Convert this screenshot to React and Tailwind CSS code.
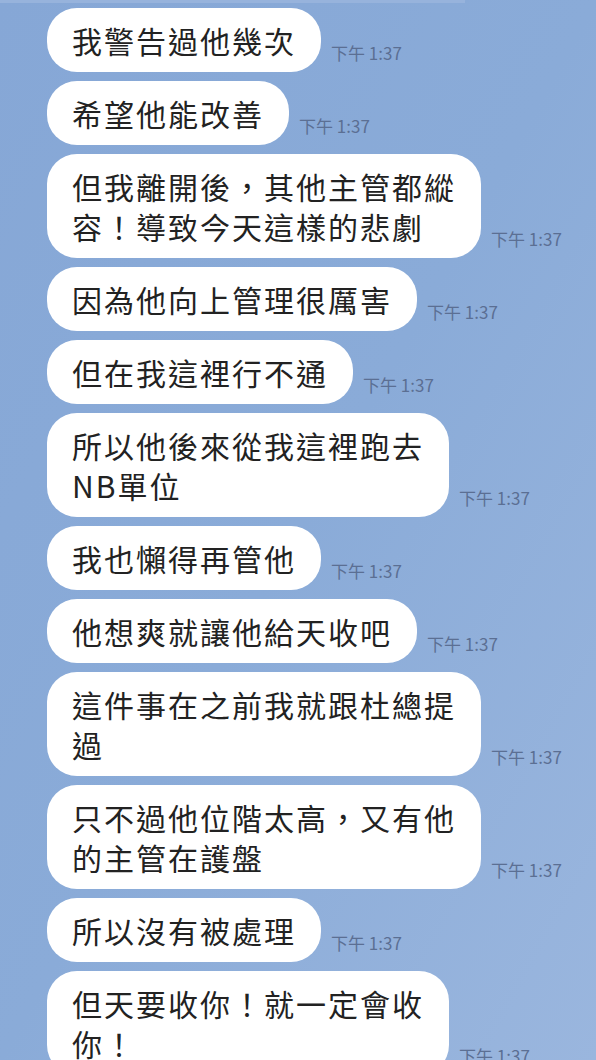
import React from "react";

const messages = [
  ["我警告過他幾次"],
  ["希望他能改善"],
  ["但我離開後，其他主管都縱", "容！導致今天這樣的悲劇"],
  ["因為他向上管理很厲害"],
  ["但在我這裡行不通"],
  ["所以他後來從我這裡跑去", "NB單位"],
  ["我也懶得再管他"],
  ["他想爽就讓他給天收吧"],
  ["這件事在之前我就跟杜總提", "過"],
  ["只不過他位階太高，又有他", "的主管在護盤"],
  ["所以沒有被處理"],
  ["但天要收你！就一定會收", "你！"],
];

function Bubble({ lines }) {
  return (
    <div className="flex items-end gap-[10px]">
      <div className="rounded-[30px] bg-white px-[25px] py-[12px] text-[30px] leading-[40px] tracking-[2px] text-[#222222]">
        {lines.map((l, i) => (
          <div key={i} className="whitespace-nowrap">
            {l}
          </div>
        ))}
      </div>
      <span
        className="pb-[9px] text-[17px] leading-[20px] text-[#5b6f93] whitespace-nowrap"
        style={{ fontFamily: '"Noto Sans CJK TC", "Liberation Sans", sans-serif' }}
      >
        下午 1:37
      </span>
    </div>
  );
}

export default function App() {
  return (
    <div
      className="h-[1060px] w-[596px] overflow-hidden bg-gradient-to-br from-[#86a7d6] via-[#8aabd8] to-[#9ab6de]"
      style={{ fontFamily: '"Noto Sans CJK TC", "Noto Sans", sans-serif' }}
    >
      <div className="h-[3px] w-[465px] bg-[#97b3dc]" />
      <div className="flex flex-col gap-[9px] pl-[47px] pt-[5px]">
        {messages.map((m, i) => (
          <Bubble key={i} lines={m} />
        ))}
      </div>
    </div>
  );
}
